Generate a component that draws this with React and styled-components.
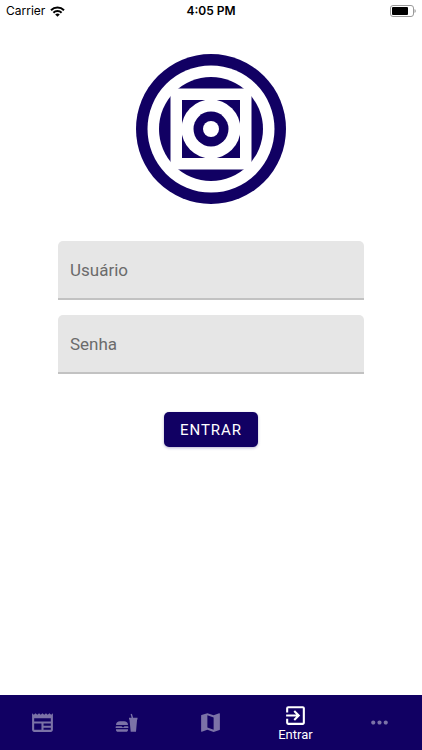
import * as React from "react";
import styled, { createGlobalStyle } from "styled-components";
import { MdExitToApp, MdMap, MdMoreHoriz, MdNewspaper } from "react-icons/md";

const navy = "#110063";

const GlobalStyle = createGlobalStyle`
  * {
    box-sizing: border-box;
  }

  body {
    margin: 0;
    background-color: white;
    font-family: Roboto, "Liberation Sans", sans-serif;
  }
`;

const Screen = styled.div`
  display: flex;
  flex-direction: column;
  min-height: 100vh;
`;

const StatusBar = styled.header`
  display: grid;
  grid-template-columns: 1fr auto 1fr;
  align-items: center;
  height: 22px;
  padding: 0 6px;
  color: black;
  font-family: Inter, sans-serif;
  font-size: 12px;
  line-height: 16px;

  svg {
    display: block;
  }
`;

const Carrier = styled.div`
  display: flex;
  align-items: center;
  gap: 5px;
`;

const Clock = styled.time`
  font-weight: 600;
`;

const Battery = styled.div`
  justify-self: end;
`;

const Content = styled.main`
  flex: 1;
  display: flex;
  flex-direction: column;
  align-items: center;
  padding: 32px 58px;
`;

const Logo = styled.svg`
  display: block;
  width: 150px;
  height: 150px;
`;

const Form = styled.form`
  display: flex;
  flex-direction: column;
  gap: 15px;
  width: 100%;
  margin-top: 37px;
`;

const Field = styled.div`
  position: relative;
  height: 59px;

  label {
    position: absolute;
    top: 0;
    left: 12px;
    color: #6b6b6b;
    font-size: 17px;
    line-height: 58px;
    pointer-events: none;
  }

  input:focus + label,
  input:not(:placeholder-shown) + label {
    font-size: 12px;
    line-height: 24px;
  }
`;

const Input = styled.input`
  display: block;
  width: 100%;
  height: 100%;
  padding: 16px 12px 0;
  border: none;
  border-bottom: 2px solid #c2c2c2;
  border-radius: 5px 5px 0 0;
  outline: none;
  background-color: #e6e6e6;
  font-family: inherit;
  font-size: 17px;
`;

const SubmitButton = styled.button`
  align-self: center;
  height: 35px;
  margin-top: 23px;
  padding: 0 16px;
  border: none;
  border-radius: 5px;
  background-color: ${navy};
  box-shadow: 0 1px 3px rgba(17, 0, 99, 0.3);
  color: white;
  font-family: inherit;
  font-size: 15px;
  letter-spacing: 1px;
  text-transform: uppercase;
`;

const TabBar = styled.nav`
  position: sticky;
  bottom: 0;
  display: grid;
  grid-template-columns: repeat(5, 1fr);
  height: 55px;
  background-color: ${navy};
`;

const Tab = styled.a`
  display: flex;
  flex-direction: column;
  align-items: center;
  justify-content: center;
  color: ${(props) => (props.$active ? "white" : "#7b72a7")};
  font-size: 13px;
  line-height: 14px;
  text-decoration: none;
`;

const WifiIcon = () => (
  <svg width="15" height="11" viewBox="0 0 15 11" aria-hidden="true">
    <g fill="none" stroke="black" strokeWidth="2">
      <path d="M1 4.2a9.2 9.2 0 0 1 13 0" />
      <path d="M3.4 6.7a5.8 5.8 0 0 1 8.2 0" />
    </g>
    <path d="M7.5 10.8 5.2 8.5a3.3 3.3 0 0 1 4.6 0z" />
  </svg>
);

const BatteryIcon = () => (
  <svg width="26" height="12" viewBox="0 0 26 12" aria-hidden="true">
    <rect
      x="0.5"
      y="0.5"
      width="23"
      height="11"
      rx="2.5"
      fill="none"
      stroke="#9a9a9a"
    />
    <rect x="2" y="2" width="16" height="8" rx="1" />
    <path d="M24.5 4v4a2.2 2.2 0 0 0 0-4z" fill="#9a9a9a" />
  </svg>
);

// burger on the left, cup with a straw on the right
const FoodIcon = ({ size }) => (
  <svg
    width={size}
    height={size}
    viewBox="0 0 25 25"
    fill="currentColor"
    aria-hidden="true"
  >
    <path d="M2 15c0-2.600 1.600-3.700 4-3.700h4c2.400 0 4 1.100 4 3.700z" />
    <path d="M2.500 16.200h5l1.500 1.300 1.500-1.300h3a.8.8 0 0 1 0 1.900h-11a.8.800 0 0 1 0-1.900z" />
    <path d="M2 19.300h12v.400c0 1.300-.800 2.100-2 2.100H4c-1.200 0-2-.8-2-2.100z" />
    <path d="M15 7.700h2.600l-1-3.500 1.300-.5 1.200 4H23.500v1.800h-.4l-1.100 12.300h-5.300L15.500 9.500H15z" />
  </svg>
);

const BrandMark = () => (
  <Logo viewBox="-75 -75 150 150" aria-hidden="true">
    <circle r="75" fill={navy} />
    <circle r="63.5" fill="white" />
    <circle r="52" fill={navy} />
    <rect x="-40.5" y="-40.5" width="81" height="81" fill="white" />
    <rect x="-29" y="-29" width="58" height="58" fill={navy} />
    <circle r="29.5" fill="white" />
    <circle r="17.5" fill={navy} />
    <circle r="8" fill="white" />
  </Logo>
);

const tabs = [
  { label: "Notícias", href: "#noticias", icon: MdNewspaper },
  { label: "Cardápio", href: "#cardapio", icon: FoodIcon },
  { label: "Mapa", href: "#mapa", icon: MdMap },
  { label: "Entrar", href: "#entrar", icon: MdExitToApp, active: true },
  { label: "Mais", href: "#mais", icon: MdMoreHoriz },
];

const App = () => (
  <Screen>
    <GlobalStyle />
    <StatusBar>
      <Carrier>
        Carrier
        <WifiIcon />
      </Carrier>
      <Clock>4:05 PM</Clock>
      <Battery>
        <BatteryIcon />
      </Battery>
    </StatusBar>

    <Content>
      <BrandMark />
      <Form onSubmit={(e) => e.preventDefault()}>
        <Field>
          <Input id="user" type="text" placeholder=" " />
          <label htmlFor="user">Usuário</label>
        </Field>
        <Field>
          <Input id="password" type="password" placeholder=" " />
          <label htmlFor="password">Senha</label>
        </Field>
        <SubmitButton type="submit">Entrar</SubmitButton>
      </Form>
    </Content>

    <TabBar>
      {tabs.map(({ label, href, icon: Icon, active }) => (
        <Tab
          key={href}
          href={href}
          $active={active}
          aria-label={label}
          aria-current={active ? "page" : undefined}
        >
          <Icon size={25} />
          {active && label}
        </Tab>
      ))}
    </TabBar>
  </Screen>
);

export default App;
